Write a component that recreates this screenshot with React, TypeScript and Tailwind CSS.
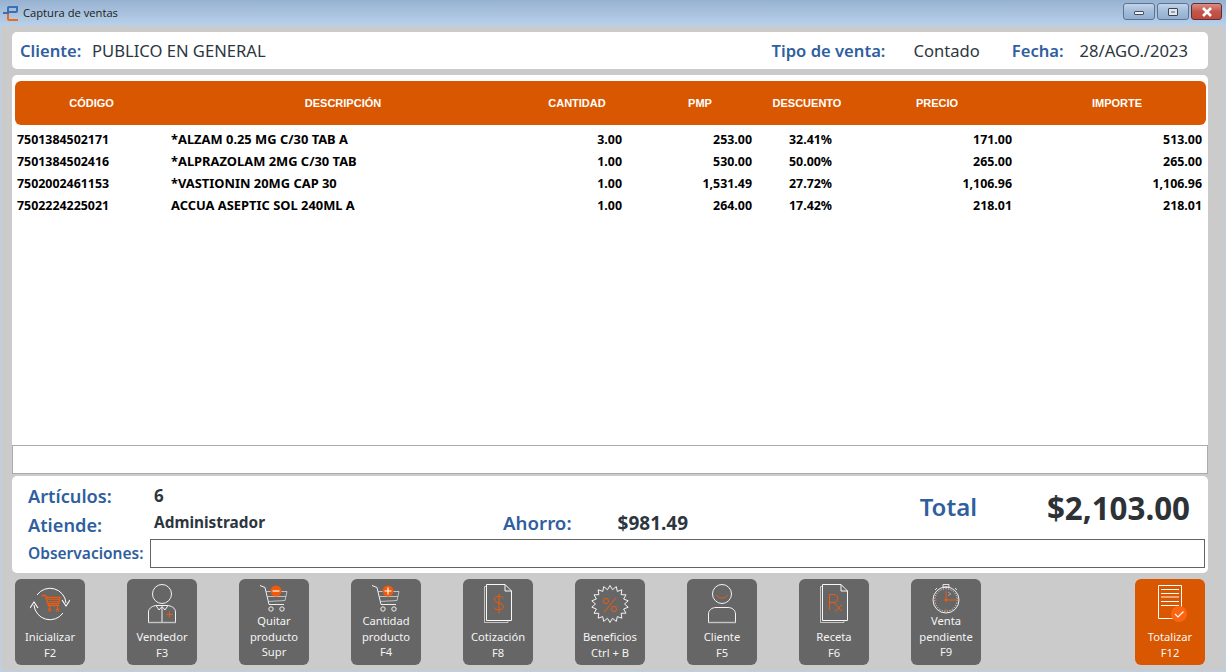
import type { ReactNode } from 'react';

const gridCols = 'grid grid-cols-[153px_350px_118px_128px_86px_174px_182px]';
const orange = '#f15a0a';

const rows = [
  ['7501384502171', '*ALZAM 0.25 MG C/30 TAB A', '3.00', '253.00', '32.41%', '171.00', '513.00'],
  ['7501384502416', '*ALPRAZOLAM 2MG C/30 TAB', '1.00', '530.00', '50.00%', '265.00', '265.00'],
  ['7502002461153', '*VASTIONIN 20MG CAP 30', '1.00', '1,531.49', '27.72%', '1,106.96', '1,106.96'],
  ['7502224225021', 'ACCUA ASEPTIC SOL 240ML A', '1.00', '264.00', '17.42%', '218.01', '218.01'],
];

// spiky outline of the "Beneficios" badge
const starPoints = Array.from({ length: 36 }, (_, i) => {
  const a = (i * Math.PI) / 18 - Math.PI / 2;
  const r = i % 2 === 0 ? 18.5 : 14.5;
  return `${(19 + r * Math.cos(a)).toFixed(1)},${(19 + r * Math.sin(a)).toFixed(1)}`;
}).join(' ');

function Cart({ badge }: { badge: 'minus' | 'plus' }) {
  return (
    <svg width="30" height="30" viewBox="0 0 30 30" fill="none" className="block">
      <path d="M1 1.5 L6 3.5 L10 20.5 H25" stroke="#f0f0f0" strokeWidth="1" />
      <path d="M7 7.5 H28 L26 16.5 L9 17.5 M8 12.5 H27" stroke="#d8d8d8" strokeWidth="0.8" />
      <circle cx="12" cy="25" r="2.2" stroke="#f0f0f0" />
      <circle cx="23" cy="25" r="2.2" stroke="#f0f0f0" />
      <circle cx="17" cy="7" r="5.5" fill={orange} />
      <path d={badge === 'minus' ? 'M13.5 7 H20.5' : 'M13.5 7 H20.5 M17 3.5 V10.5'} stroke="#fff" strokeWidth="1.2" />
    </svg>
  );
}

function RefreshCart() {
  return (
    <svg width="40" height="36" viewBox="0 0 40 36" fill="none" className="block">
      <path d="M7 9 A16 16 0 0 1 36 17" stroke="#fff" strokeWidth="1" />
      <path d="M33 27 A16 16 0 0 1 4 19" stroke="#fff" strokeWidth="1" />
      <path d="M32 14 L36 20 L40 14 M0 22 L4 16 L8 22" stroke="#fff" strokeWidth="1.1" />
      <path d="M11.5 9.5 H15.5 L18.5 19.5 H29 M16 11.5 H30 L28.5 17.5 H18" stroke={orange} strokeWidth="1.4" />
      <path d="M18 13.5 H29 M18.5 15.5 H28.5" stroke={orange} strokeWidth="0.8" />
      <path d="M19.5 20 V24 M27.5 20 V24" stroke={orange} strokeWidth="1" />
      <circle cx="19.5" cy="24" r="1.4" stroke={orange} />
      <circle cx="27.5" cy="24" r="1.4" stroke={orange} />
    </svg>
  );
}

function Seller() {
  return (
    <svg width="30" height="40" viewBox="0 0 30 40" fill="none" className="block">
      <circle cx="15" cy="10" r="9.5" stroke="#f4f4f4" />
      <path d="M1.5 38.5 V28 C1.5 24 6 21.5 10 21.5 H20 C24 21.5 28.5 24 28.5 28 V38.5 Z" stroke="#f4f4f4" />
      <path d="M1 38.5 H29" stroke="#c4c4c4" strokeWidth="1.4" />
      <path d="M9 21.5 L12 26 L15 22.5 L18 26 L21 21.5 M15 23 V38" stroke="#f4f4f4" />
      <path d="M19.5 30.5 H25.5 M22.5 27.5 V33.5" stroke={orange} />
    </svg>
  );
}

function Pages({ children }: { children: ReactNode }) {
  return (
    <svg width="30" height="40" viewBox="0 0 30 40" fill="none" className="block">
      <path d="M3 2.5 H1.5 V38.5 H25 V36.5" stroke="#c4c4c4" strokeWidth="1" />
      <path d="M3.5 0.5 H22 L28.5 7 V36.5 H3.5 Z M22 0.5 V7 H28.5" stroke="#f8f8f8" strokeWidth="1" />
      {children}
    </svg>
  );
}

function Badge() {
  return (
    <svg width="38" height="40" viewBox="0 -1 38 40" fill="none" className="block">
      <polygon points={starPoints} stroke="#f4f4f4" />
      <circle cx="15" cy="16" r="2.6" stroke={orange} />
      <circle cx="23" cy="24" r="2.6" stroke={orange} />
      <path d="M25 12.5 L13 27.5" stroke={orange} />
    </svg>
  );
}

function Person() {
  return (
    <svg width="30" height="40" viewBox="0 0 30 40" fill="none" className="block">
      <circle cx="15" cy="10" r="9.5" stroke="#f4f4f4" />
      <path d="M9.5 11 C12 15 18 15 20.5 11" stroke={orange} />
      <path d="M1.5 38.5 V30 C1.5 26 5 23.5 9 23.5 H21 C25 23.5 28.5 26 28.5 30 V38.5 Z" stroke="#f4f4f4" />
      <path d="M1 38.5 H29" stroke="#c4c4c4" strokeWidth="1.4" />
    </svg>
  );
}

function Watch() {
  return (
    <svg width="30" height="30" viewBox="0 0 30 30" fill="none" className="block">
      <path d="M12 0.5 H18 V3 H12 Z M15 3 V4 M6 4 L4 6 M24 4 L26 6" stroke="#f0f0f0" strokeWidth="0.9" />
      <circle cx="15" cy="16" r="13" stroke="#f0f0f0" />
      <circle cx="15" cy="16" r="11.2" stroke="#f0f0f0" strokeDasharray="1 1.6" />
      <path d="M15 7 V16 H27" stroke={orange} />
      <path d="M4.5 16 H6 M15 25 V27" stroke={orange} />
      <circle cx="15" cy="16" r="1.5" fill={orange} />
      <path d="M17 8 L20 10 L17 11.5" stroke="#bbb" strokeWidth="0.7" />
    </svg>
  );
}

function Receipt() {
  return (
    <svg width="32" height="38" viewBox="0 0 32 38" fill="none" className="block">
      <path d="M1.5 1.5 H24.5 V34.5 H1.5 Z" stroke="#fff" />
      <path d="M4 5.5 H22 M4 9.5 H22 M4 17.5 H22 M4 21.5 H22" stroke="#fff" />
      <path d="M4 13 H22" stroke="#f3c7ae" strokeWidth="1.4" />
      <circle cx="22" cy="30" r="8" fill="#fb6410" />
      <path d="M18 30 L21 33 L26.5 27.5" stroke="#fff" strokeWidth="1.1" />
    </svg>
  );
}

const buttons: { icon: ReactNode; lines: string[] }[] = [
  { icon: <RefreshCart />, lines: ['Inicializar', 'F2'] },
  { icon: <Seller />, lines: ['Vendedor', 'F3'] },
  { icon: <Cart badge="minus" />, lines: ['Quitar', 'producto', 'Supr'] },
  { icon: <Cart badge="plus" />, lines: ['Cantidad', 'producto', 'F4'] },
  {
    icon: (
      <Pages>
        <path d="M20.5 14.5 C19.5 11.5 11.5 11.5 11.5 15 C11.5 20 20.5 18 20.5 23 C20.5 26.5 12 26.5 11 23.5 M16 10 V29" stroke={orange} />
      </Pages>
    ),
    lines: ['Cotización', 'F8'],
  },
  { icon: <Badge />, lines: ['Beneficios', 'Ctrl + B'] },
  { icon: <Person />, lines: ['Cliente', 'F5'] },
  {
    icon: (
      <Pages>
        <path d="M10.5 26 V10.5 H15 C20 10.5 20 18.5 15 18.5 H10.5 M15 18.5 L23 27.5 M23 20.5 L16.5 27.5" stroke={orange} />
      </Pages>
    ),
    lines: ['Receta', 'F6'],
  },
  { icon: <Watch />, lines: ['Venta', 'pendiente', 'F9'] },
];

function ActionButton({ icon, lines }: { icon: ReactNode; lines: string[] }) {
  const three = lines.length === 3;
  return (
    <button className="w-[70px] h-[86px] rounded-[6px] bg-[#666666] flex flex-col items-center text-[11.2px] leading-[15.5px] text-[#f4f4f4] pt-[5px]">
      <div className={`flex items-center justify-center ${three ? 'h-[29px]' : 'h-[40px] mb-[5px]'}`}>{icon}</div>
      {lines.map((l) => (
        <span key={l}>{l}</span>
      ))}
    </button>
  );
}

function CaptionButton({ children, close }: { children: ReactNode; close?: boolean }) {
  return (
    <div
      className={`h-[17px] flex items-center justify-center rounded-[3px] border ${
        close
          ? 'w-[31px] border-[#5c2f36] bg-gradient-to-b from-[#d98e84] via-[#c2554a] to-[#c0473c]'
          : 'w-[32px] border-[#5d7393] bg-gradient-to-b from-[#c3d4e8] via-[#a3bcd9] to-[#92aed0]'
      }`}
    >
      {children}
    </div>
  );
}

export default function App() {
  return (
    <div className="w-[1226px] h-[672px] overflow-hidden bg-[#b9d1ea] pl-[1px] pr-[1px] pb-[1px] font-['Noto_Sans',sans-serif]">
      {/* title bar */}
      <div className="h-[26px] -mx-[1px] flex items-center bg-gradient-to-b from-[#97b2d1] to-[#b9d1ea] pl-[3px] pr-[3px]">
        <svg width="16" height="16" viewBox="0 0 16 16" fill="none" className="block -mt-[1px]">
          <path d="M0 8 H5 V2.5 Q5 2 6 2 H14 V6 Q14 7 13 7 H5" stroke="#3c6fb0" strokeWidth="2" />
          <path d="M5 9 V14 Q5 15 6 15 H15" stroke="#f06a15" strokeWidth="2" />
        </svg>
        <span className="ml-[4px] text-[11.2px] text-[#1c1c1c] font-['Open_Sans',sans-serif]">Captura de ventas</span>
        <div className="ml-auto flex gap-[2px] -mt-[3px] pr-[1px]">
          <CaptionButton>
            <div className="w-[10px] h-[4px] mt-[3px] bg-[#eef3f9] border border-[#4a4f57] rounded-[1px]" />
          </CaptionButton>
          <CaptionButton>
            <div className="w-[10px] h-[8px] bg-[#dfe7f0] border border-[#3f444b] rounded-[1px] flex items-center justify-center">
              <div className="w-[4px] h-[2px] bg-[#8fa5bf]" />
            </div>
          </CaptionButton>
          <CaptionButton close>
            <svg width="12" height="10" viewBox="0 0 12 10">
              <path d="M2 1 L10 9 M10 1 L2 9" stroke="#fff" strokeWidth="2.6" />
            </svg>
          </CaptionButton>
        </div>
      </div>

      <div className="h-[645px] bg-[#cbcbcb] pt-[6px] pl-[11px]">
        {/* client */}
        <div className="w-[1196px] h-[37px] rounded-[5px] bg-white flex items-center text-[16.6px] text-[#2d3640] pt-[2px]">
          <span className="ml-[8px] w-[72px] font-semibold text-[#2f5f9e]">Cliente:</span>
          <span>PUBLICO EN GENERAL</span>
          <span className="ml-auto font-semibold text-[#2f5f9e]">Tipo de venta:</span>
          <span className="ml-[28px]">Contado</span>
          <span className="ml-[32px] font-semibold text-[#2f5f9e]">Fecha:</span>
          <span className="ml-[16px] mr-[20px]">28/AGO./2023</span>
        </div>

        {/* table */}
        <div className="mt-[6px] w-[1196px] h-[370px] rounded-t-[5px] bg-white pt-[6px] pl-[3px]">
          <div className={`${gridCols} w-[1191px] h-[44px] items-center rounded-[6px] bg-[#d95700] text-center text-[11px] font-bold text-white font-['Liberation_Sans',sans-serif]`}>
            <span>CÓDIGO</span>
            <span>DESCRIPCIÓN</span>
            <span>CANTIDAD</span>
            <span>PMP</span>
            <span>DESCUENTO</span>
            <span>PRECIO</span>
            <span className="pl-[4px]">IMPORTE</span>
          </div>
          <div className="mt-[3px] text-[12.4px] font-bold leading-[22px] text-black">
            {rows.map((r) => (
              <div key={r[0]} className={`${gridCols} w-[1191px] h-[22px] items-baseline`}>
                <span className="pl-[2px]">{r[0]}</span>
                <span className="pl-[3px] text-[12.9px]">{r[1]}</span>
                <span className="pr-[14px] text-right">{r[2]}</span>
                <span className="pr-[12px] text-right">{r[3]}</span>
                <span className="pr-[18px] text-right">{r[4]}</span>
                <span className="pr-[12px] text-right">{r[5]}</span>
                <span className="pr-[4px] text-right">{r[6]}</span>
              </div>
            ))}
          </div>
        </div>

        {/* strip */}
        <div className="w-[1196px] h-[29px] bg-white border border-[#ababab]" />

        {/* summary */}
        <div className="mt-[2px] w-[1196px] h-[97px] rounded-[5px] bg-white relative pl-[16px]">
          <div className="flex h-[40px] items-start pt-[6px]">
            <span className="w-[126px] text-[18.2px] leading-[28px] font-semibold text-[#2f5f9e]">Artículos:</span>
            <span className="text-[17px] leading-[28px] font-bold text-[#2d3640]">6</span>
            <span className="ml-auto mr-[231px] mt-[8px] text-[24px] leading-[34px] font-semibold text-[#2f5f9e]">Total</span>
            <span className="absolute right-[18px] top-[9px] text-[31.3px] leading-[46px] font-bold text-[#2d3236]">$2,103.00</span>
          </div>
          <div className="flex h-[23px] items-start -mt-[5px]">
            <span className="w-[126px] text-[18.2px] leading-[28px] font-semibold text-[#2f5f9e]">Atiende:</span>
            <span className="text-[15.4px] leading-[24px] font-bold text-[#2d3640]">Administrador</span>
            <span className="ml-[238px] -mt-[2px] text-[18.7px] leading-[28px] font-semibold text-[#2f5f9e]">Ahorro:</span>
            <span className="ml-[46px] -mt-[2px] text-[19px] leading-[28px] font-bold text-[#2d3640]">$981.49</span>
          </div>
          <div className="flex items-center mt-[5px]">
            <span className="w-[122px] text-[15.5px] font-semibold text-[#2f5f9e]">Observaciones:</span>
            <div className="w-[1055px] h-[29px] bg-white border border-[#646464]" />
          </div>
        </div>

        {/* actions */}
        <div className="mt-[6px] ml-[3px] flex gap-[42px] w-[1190px]">
          {buttons.map((b) => (
            <ActionButton key={b.lines[0]} icon={b.icon} lines={b.lines} />
          ))}
          <button className="ml-auto w-[70px] h-[86px] rounded-[6px] bg-[#d95700] flex flex-col items-center text-[11.2px] leading-[15.5px] text-[#f8f8f8] pt-[5px]">
            <div className="h-[40px] mb-[5px] pl-[6px]">
              <Receipt />
            </div>
            <span>Totalizar</span>
            <span>F12</span>
          </button>
        </div>
      </div>
    </div>
  );
}
